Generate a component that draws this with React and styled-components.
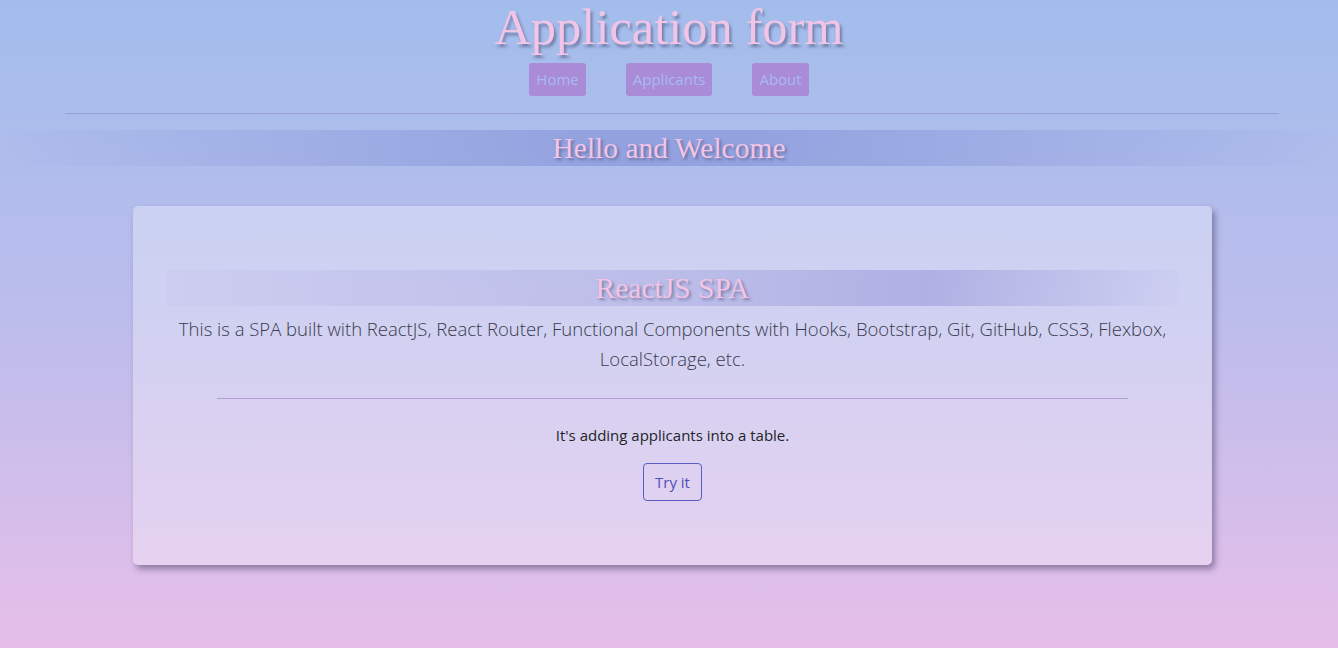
import styled, { createGlobalStyle } from "styled-components";

const GlobalStyle = createGlobalStyle`
  html, body {
    margin: 0;
    padding: 0;
  }
  body {
    min-height: 648px;
    background: linear-gradient(to bottom, #a2bdec 0%, #bdbdec 50%, #e6bfe9 100%);
    font-family: "Open Sans", "Noto Sans", sans-serif;
    color: #212529;
  }
`;

const Page = styled.div`
  min-height: 648px;
  display: flex;
  flex-direction: column;
`;

const Header = styled.header`
  display: flex;
  flex-direction: column;
  align-items: center;
`;

const Title = styled.h1`
  margin: 0;
  font-family: "Liberation Serif", "Times New Roman", serif;
  font-weight: 400;
  font-size: 50.5px;
  line-height: 55px;
  color: #f2c4e6;
  text-shadow: 2px 3px 3px rgba(70, 70, 110, 0.55);
`;

const Nav = styled.nav`
  display: flex;
  gap: 40px;
  margin-top: 8px;
`;

const NavLink = styled.a`
  display: block;
  padding: 4px 7px 5px;
  background: #a98bd8;
  color: #a8bcf0;
  border-radius: 3px;
  font-size: 15px;
  line-height: 24px;
  text-decoration: none;
`;

const Rule = styled.hr`
  border: 0;
  border-top: 1px solid #9c9fd8;
  margin: 17px 59px 16px 65px;
`;

const Band = styled.h2`
  margin: 0;
  height: 36px;
  display: flex;
  align-items: center;
  justify-content: center;
  font-family: "Liberation Serif", "Times New Roman", serif;
  font-weight: 400;
  font-size: 29.5px;
  color: #f2c4e6;
  text-shadow: 2px 2px 3px rgba(70, 70, 110, 0.55);
  background: ${(p) =>
    p.$inner
      ? "linear-gradient(100deg, rgba(200,190,235,0.2) 0%, rgba(160,160,220,0.45) 55%, rgba(150,150,215,0.55) 75%, rgba(200,200,240,0.2) 100%)"
      : "linear-gradient(to right, rgba(175,185,235,0.15) 0%, rgba(140,155,220,0.8) 45%, rgba(140,155,220,0.8) 55%, rgba(175,185,235,0.15) 100%)"};
`;

const Card = styled.section`
  margin: 40px 126px 0 133px;
  padding: 64px 33px;
  border-radius: 5px;
  background: rgba(255, 255, 255, 0.3);
  box-shadow: 3px 4px 6px rgba(90, 75, 115, 0.6);
  text-align: center;
`;

const Lead = styled.p`
  margin: 8px 0 0;
  font-size: 18.5px;
  font-weight: 300;
  line-height: 30px;
  color: #3b3a4c;
`;

const InnerRule = styled.hr`
  width: 90%;
  border: 0;
  border-top: 1px solid #b09ed4;
  margin: 24px auto 24px;
`;

const Text = styled.p`
  margin: 0 0 16px;
  font-size: 15px;
  line-height: 24px;
  color: #212529;
`;

const TryButton = styled.button`
  font-family: inherit;
  font-size: 15px;
  line-height: 24px;
  padding: 6px 11px;
  background: transparent;
  border: 1px solid #5a5cc8;
  border-radius: 4px;
  color: #4f50b5;
  cursor: pointer;
`;

export default function App() {
  return (
    <>
      <GlobalStyle />
      <Page>
        <Header>
          <Title>Application form</Title>
          <Nav>
            <NavLink href="#">Home</NavLink>
            <NavLink href="#">Applicants</NavLink>
            <NavLink href="#">About</NavLink>
          </Nav>
        </Header>
        <Rule />
        <Band>Hello and Welcome</Band>
        <Card>
          <Band $inner>ReactJS SPA</Band>
          <Lead>
            This is a SPA built with ReactJS, React Router, Functional Components
            with Hooks, Bootstrap, Git, GitHub, CSS3, Flexbox, LocalStorage, etc.
          </Lead>
          <InnerRule />
          <Text>It's adding applicants into a table.</Text>
          <TryButton>Try it</TryButton>
        </Card>
      </Page>
    </>
  );
}
